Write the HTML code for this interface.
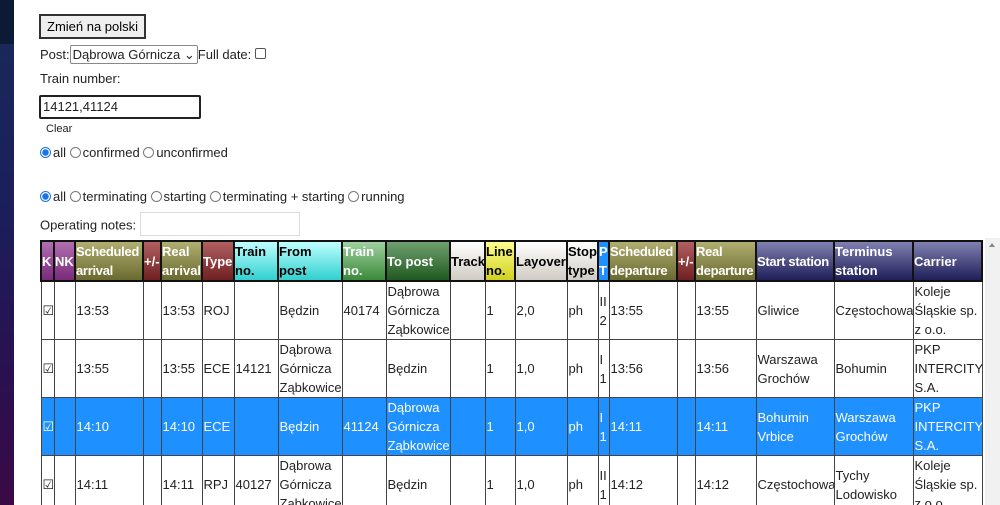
<!DOCTYPE html>
<html><head><meta charset="utf-8"><style>
html,body{margin:0;width:1000px;height:505px;overflow:hidden}
body{background:#fff;font-family:"Liberation Sans",Arial,sans-serif;font-size:13px;color:#222;position:relative}
.strip{position:absolute;left:0;top:0;width:14px;height:505px;background:linear-gradient(#1a2a5a 0,#1b1f5a 40%,#2a1050 75%,#3a0a45 100%)}
.strip:before{content:"";position:absolute;left:0;top:0;width:14px;height:44px;background:#0d1a35}
.a{position:absolute;white-space:nowrap}
button{font:13px "Liberation Sans",Arial,sans-serif}
.rad{display:inline-block;width:9px;height:9px;border:1px solid #777;border-radius:50%;vertical-align:-1px;margin:0 2px 0 0}
.rad.on{border-color:#1a73e8;background:radial-gradient(circle,#1a73e8 0 3px,#fff 3.5px)}
table{position:absolute;left:40px;top:240px;border-collapse:collapse;table-layout:fixed;width:942px}
td,th{border:1px solid #444;padding:0 1px;line-height:19px;vertical-align:middle;text-align:left;overflow:hidden}
th{font-weight:bold;color:#fff;border:2px solid #111;height:37px;padding:0;white-space:normal}
tr.b td{height:57px}
tr.sel td{background:#1e90ff;color:#fff}
.pu{background:linear-gradient(#b070b0,#7a2a7a)}
.ol{background:linear-gradient(#b0ae70,#6a6a30)}
.mr{background:linear-gradient(#b06060,#702020)}
.cy{background:linear-gradient(#c0ffff,#30d0d0);color:#000!important}
.gl{background:linear-gradient(#a0d0a0,#3a8a3a)}
.gd{background:linear-gradient(#70a070,#1f5a1f)}
.gy{background:linear-gradient(#fff,#d0ccc4);color:#000!important}
.ye{background:linear-gradient(#ffff90,#d0d020);color:#000!important}
.bl{background:#1e90ff}
.nv{background:linear-gradient(#8080b0,#1f1f5a)}
.sb{position:absolute;left:985px;top:238px;width:15px;height:267px;background:#f1f1f1}
</style></head><body>
<div class="strip"></div>
<div class="a" style="left:39px;top:14px"><button style="padding:2px 6px;height:25px;background:#efefef;border:2px solid #333">Zmień na polski</button></div>
<div class="a" style="left:40px;top:45px">Post:<span style="display:inline-block;border:1px solid #888;border-radius:2px;padding:0 2px;height:17px;line-height:17px">Dąbrowa Górnicza ⌄</span>Full date: <span style="display:inline-block;width:9px;height:9px;border:1px solid #555;border-radius:2px;vertical-align:0"></span></div>
<div class="a" style="left:40px;top:71px">Train number:</div>
<div class="a" style="left:39px;top:95px;width:156px;height:20px;border:2px solid #222;border-radius:2px;line-height:20px;padding-left:2px">14121,41124</div>
<div class="a" style="left:46px;top:123px;font-size:11px">Clear</div>
<div class="a" style="left:40px;top:145px"><span class="rad on"></span>all <span class="rad"></span>confirmed <span class="rad"></span>unconfirmed</div>
<div class="a" style="left:40px;top:189px"><span class="rad on"></span>all <span class="rad"></span>terminating <span class="rad"></span>starting <span class="rad"></span>terminating + starting <span class="rad"></span>running</div>
<div class="a" style="left:40px;top:216px">Operating notes: <span style="display:inline-block;width:158px;height:22px;border:1px solid #ddd;vertical-align:middle;margin-top:-4px"></span></div>
<table>
<colgroup><col style="width:13px"><col style="width:21px"><col style="width:68px"><col style="width:18px"><col style="width:41px"><col style="width:32px"><col style="width:44px"><col style="width:64px"><col style="width:44px"><col style="width:64px"><col style="width:35px"><col style="width:30px"><col style="width:52px"><col style="width:31px"><col style="width:11px"><col style="width:68px"><col style="width:18px"><col style="width:61px"><col style="width:78px"><col style="width:79px"><col style="width:69px"></colgroup>
<tr><th class="pu">K</th><th class="pu">NK</th><th class="ol" style="letter-spacing:-0.3px">Scheduled arrival</th><th class="mr">+/-</th><th class="ol">Real arrival</th><th class="mr">Type</th><th class="cy">Train no.</th><th class="cy">From<br>post</th><th class="gl">Train no.</th><th class="gd">To post</th><th class="gy">Track</th><th class="ye">Line no.</th><th class="gy">Layover</th><th class="gy">Stop type</th><th class="bl">P T</th><th class="ol" style="letter-spacing:-0.3px">Scheduled departure</th><th class="mr">+/-</th><th class="ol" style="letter-spacing:-0.3px">Real departure</th><th class="nv" style="white-space:nowrap;letter-spacing:-0.3px">Start station</th><th class="nv">Terminus station</th><th class="nv">Carrier</th></tr>
<tr class="b"><td>☑</td><td></td><td>13:53</td><td></td><td>13:53</td><td>ROJ</td><td></td><td>Będzin</td><td>40174</td><td>Dąbrowa Górnicza Ząbkowice</td><td></td><td>1</td><td>2,0</td><td>ph</td><td>II 2</td><td>13:55</td><td></td><td>13:55</td><td>Gliwice</td><td>Częstochowa</td><td>Koleje Śląskie sp. z o.o.</td></tr>
<tr class="b"><td>☑</td><td></td><td>13:55</td><td></td><td>13:55</td><td>ECE</td><td>14121</td><td>Dąbrowa Górnicza Ząbkowice</td><td></td><td>Będzin</td><td></td><td>1</td><td>1,0</td><td>ph</td><td>I 1</td><td>13:56</td><td></td><td>13:56</td><td>Warszawa Grochów</td><td>Bohumin</td><td>PKP INTERCITY S.A.</td></tr>
<tr class="b sel"><td>☑</td><td></td><td>14:10</td><td></td><td>14:10</td><td>ECE</td><td></td><td>Będzin</td><td>41124</td><td>Dąbrowa Górnicza Ząbkowice</td><td></td><td>1</td><td>1,0</td><td>ph</td><td>I 1</td><td>14:11</td><td></td><td>14:11</td><td>Bohumin Vrbice</td><td>Warszawa Grochów</td><td>PKP INTERCITY S.A.</td></tr>
<tr class="b"><td>☑</td><td></td><td>14:11</td><td></td><td>14:11</td><td>RPJ</td><td>40127</td><td>Dąbrowa Górnicza Ząbkowice</td><td></td><td>Będzin</td><td></td><td>1</td><td>1,0</td><td>ph</td><td>II 1</td><td>14:12</td><td></td><td>14:12</td><td>Częstochowa</td><td>Tychy Lodowisko</td><td>Koleje Śląskie sp. z o.o.</td></tr>
</table>
<div class="sb"><div style="position:absolute;left:4px;top:5px;width:0;height:0;border:3px solid transparent;border-bottom:4px solid #888;border-top:0"></div></div>
</body></html>
